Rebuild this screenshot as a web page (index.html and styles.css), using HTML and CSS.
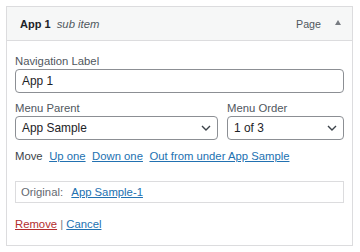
FILE: index.html
```html
<!DOCTYPE html>
<html>
<head>
<meta charset="utf-8">
<link rel="stylesheet" href="styles.css">
</head>
<body>
<div class="item">
  <div class="item-bar">
    <span class="item-title"><b>App 1</b> <i class="sub">sub item</i></span>
    <span class="item-controls"><span class="type">Page</span><span class="toggle"></span></span>
  </div>
  <div class="item-settings">
    <label class="lbl">Navigation Label</label>
    <div class="field">App 1</div>
    <div class="row">
      <div class="col parent">
        <label class="lbl">Menu Parent</label>
        <div class="field select">App Sample
          <svg class="chev" width="10" height="6" viewBox="0 0 10 6"><path d="M1 1l4 4 4-4" fill="none" stroke="#3c434a" stroke-width="1.4"/></svg>
        </div>
      </div>
      <div class="col order">
        <label class="lbl">Menu Order</label>
        <div class="field select">1 of 3
          <svg class="chev" width="10" height="6" viewBox="0 0 10 6"><path d="M1 1l4 4 4-4" fill="none" stroke="#3c434a" stroke-width="1.4"/></svg>
        </div>
      </div>
    </div>
    <div class="move">
      <span>Move</span>
      <a href="#">Up one</a>
      <a href="#">Down one</a>
      <a href="#">Out from under App Sample</a>
    </div>
    <div class="original">Original:&nbsp; <a href="#">App Sample-1</a></div>
    <div class="actions"><a href="#" class="remove">Remove</a> <span class="sep">|</span> <a href="#">Cancel</a></div>
  </div>
</div>
</body>
</html>
```

FILE: styles.css
```css
* { box-sizing: border-box; }
html, body { margin: 0; padding: 0; background: #fff; }
body {
  font-family: "Liberation Sans", Arial, sans-serif;
  font-size: 11.3px;
  color: #3c434a;
}
.item {
  margin: 6px 0 0 6px;
  width: 347px;
  height: 240px;
  border: 1px solid #dcdcde;
  display: flex;
  flex-direction: column;
}
.item-bar {
  height: 34px;
  background: #f6f7f7;
  border-bottom: 1px solid #dcdcde;
  display: flex;
  align-items: center;
  justify-content: space-between;
  padding: 0 11px 0 13px;
}
.item-title b { font-weight: bold; color: #1d2327; font-size: 11px; }
.item-title .sub { color: #50575e; margin-left: 3px; font-size: 11.3px; }
.item-controls { display: flex; align-items: center; color: #50575e; font-size: 10.7px; }
.toggle {
  width: 0; height: 0;
  margin-left: 14px;
  border-left: 3.5px solid transparent;
  border-right: 3.5px solid transparent;
  border-bottom: 5px solid #787c82;
  position: relative; top: -1px;
}
.item-settings {
  padding: 13px 8px 14px 8px;
  display: flex;
  flex-direction: column;
}
.lbl {
  display: block;
  line-height: 14px;
  height: 14px;
  margin-bottom: 1px;
  color: #50575e;
}
.field {
  height: 24px;
  border: 1px solid #8c8f94;
  border-radius: 4px;
  padding: 0 7px 0 6px;
  display: flex;
  align-items: center;
  font-size: 11.9px;
  color: #1d2327;
  background: #fff;
}
.select { justify-content: space-between; padding-right: 6px; }
.chev { flex: none; }
.row { display: flex; gap: 9px; margin-top: 8px; }
.parent { width: 203px; }
.order { flex: 1; }
.move {
  margin-top: 9px;
  line-height: 14px;
  display: flex;
  gap: 6.5px;
}
a { color: #2271b1; text-decoration: underline; }
.original {
  margin-top: 18px;
  height: 22px;
  border: 1px solid #dcdcde;
  display: flex;
  align-items: center;
  padding-left: 5px;
  color: #646970;
  white-space: pre;
}
.original a { margin-left: 2px; }
.actions { margin-top: 14px; line-height: 14px; }
.remove { color: #b32d2e; }
.sep { color: #787c82; }
```
